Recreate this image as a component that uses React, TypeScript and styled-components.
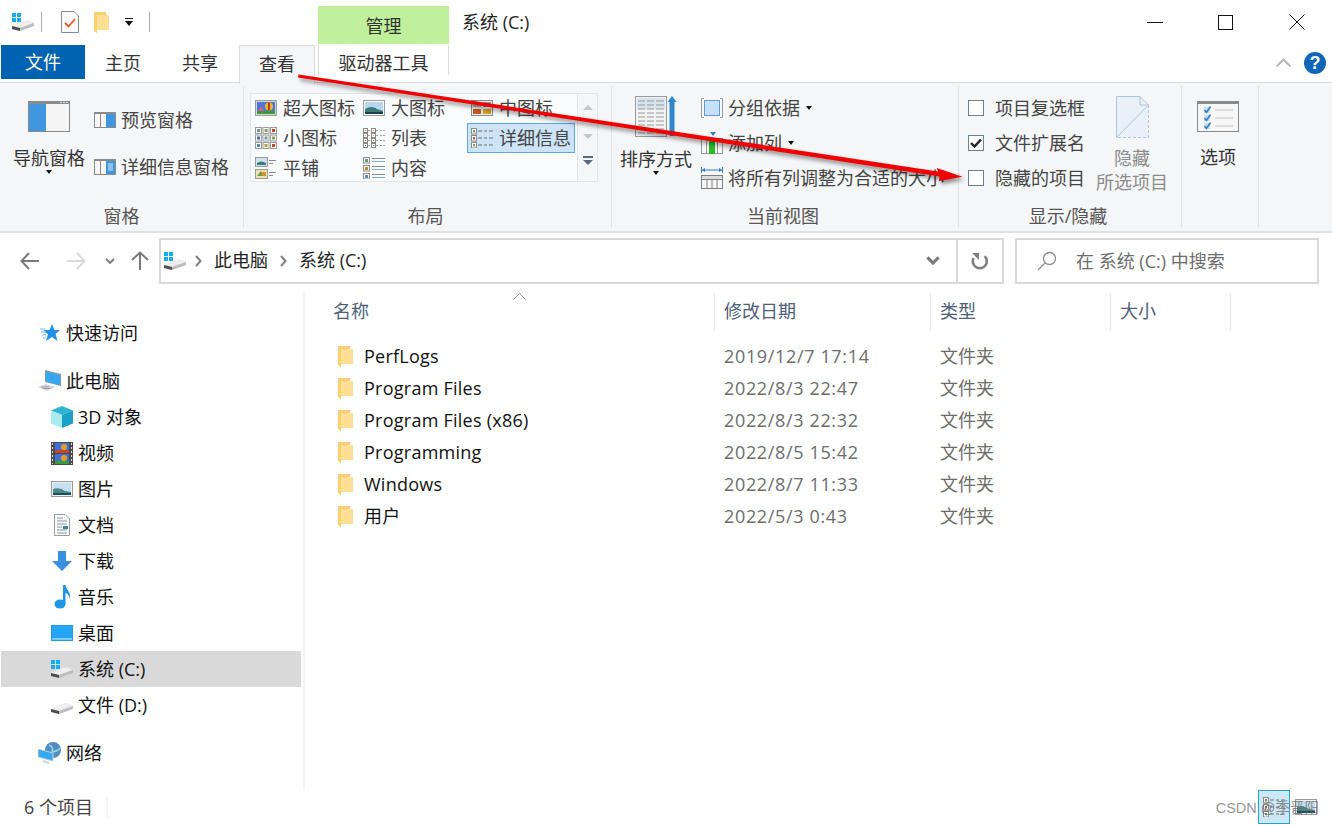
import React from 'react';
import styled, { createGlobalStyle } from 'styled-components';

const GlobalStyle = createGlobalStyle`
    html, body { margin: 0; padding: 0; background: #fff; }
    * { box-sizing: border-box; }
`

const Window = styled.div`
    position: relative;
    width: 1332px;
    height: 826px;
    overflow: hidden;
    display: flex;
    flex-direction: column;
    background: #fff;
    color: #1a1a1a;
    font-family: "Open Sans", "Noto Sans CJK SC", sans-serif;
    font-size: 18px;
    line-height: 24px;
`

const TitleBar = styled.div`
    display: flex;
    height: 44px;
    flex: none;
`

const QuickAccess = styled.div`
    width: 318px;
    display: flex;
    align-items: center;
    padding-left: 12px;
`

const QuickSep = styled.span<{ $ml: number }>`
    width: 1px;
    height: 20px;
    margin-left: ${p => p.$ml}px;
    background: #a9a9a9;
`

const IconSlot = styled.span<{ $ml: number }>`
    display: flex;
    flex: none;
    margin-left: ${p => p.$ml}px;
`

const ContextHead = styled.div`
    width: 131px;
    margin-top: 6px;
    background: #c0f09c;
    color: #333;
    text-align: center;
    line-height: 40px;
`

const WindowTitle = styled.div`
    margin-left: 13px;
    line-height: 44px;
    color: #222;
    flex: 1;
`

const WindowControls = styled.div`
    display: flex;
`

const ControlButton = styled.div`
    width: 71px;
    display: flex;
    align-items: center;
    justify-content: center;
`

const TabRow = styled.div`
    display: flex;
    height: 39px;
    flex: none;
    align-items: stretch;
    border-bottom: 1px solid #dadbdc;
    position: relative;
`

const FileTab = styled.div`
    width: 84px;
    height: 34px;
    margin: 1px 0 0 1px;
    background: #0063b1;
    color: #fff;
    text-align: center;
    line-height: 34px;
`

const Tab = styled.div<{ $w: number }>`
    width: ${p => p.$w}px;
    text-align: center;
    line-height: 38px;
    color: #333;
`

const ActiveTab = styled.div`
    width: 76px;
    height: 39px;
    margin: 1px 3px 0 0;
    background: #f5f6f7;
    border: 1px solid #dadbdc;
    border-bottom: none;
    text-align: center;
    line-height: 36px;
    color: #333;
    z-index: 1;
`

const ContextTab = styled.div`
    width: 131px;
    height: 30px;
    margin-top: 1px;
    border: solid #dadbdc;
    border-width: 0 1px;
    text-align: center;
    line-height: 36px;
    color: #333;
`

const CollapseArea = styled.div`
    margin-left: auto;
    display: flex;
    align-items: center;
    height: 38px;
    gap: 12px;
    padding-right: 6px;

    & > svg { transform: rotate(180deg); }
`

const HelpBadge = styled.div`
    width: 22px;
    height: 22px;
    border-radius: 50%;
    background: #0f67b8;
    color: #fff;
    font: bold 18px/22px "Liberation Sans", sans-serif;
    text-align: center;
`

const Ribbon = styled.div`
    display: flex;
    flex: none;
    height: 150px;
    padding: 3px 0 3px;
    background: #f5f6f7;
    border-bottom: 2px solid #dfe0e2;
`

const Group = styled.section<{ $w: number }>`
    width: ${p => p.$w}px;
    display: flex;
    flex-direction: column;
    border-right: 1px solid #e1e3e6;
`

const GroupBody = styled.div<{ $pad?: number }>`
    display: flex;
    flex: none;
    height: 118px;
    padding-left: ${p => p.$pad ?? 0}px;
`

const GroupLabel = styled.div<{ $shift?: number }>`
    text-align: center;
    line-height: 24px;
    color: #555;
    padding-right: ${p => p.$shift ?? 0}px;
`

const LargeButton = styled.div<{ $top: number; $gap: number; $muted?: boolean; $ml?: number }>`
    width: 72px;
    flex: none;
    display: flex;
    flex-direction: column;
    align-items: center;
    text-align: center;
    margin-left: ${p => p.$ml ?? 0}px;
    padding-top: ${p => p.$top}px;
    color: ${p => (p.$muted ? '#8c8c8c' : '#333')};

    & > svg { margin-bottom: ${p => p.$gap}px; flex: none; }
`

const Caret = styled.i<{ $ml?: number }>`
    display: inline-block;
    flex: none;
    width: 0;
    height: 0;
    margin-left: ${p => p.$ml ?? 0}px;
    border: 3.5px solid transparent;
    border-top: 4px solid #111;
    border-bottom: none;
`

const SmallColumn = styled.div<{ $top: number; $gap: number; $ml: number }>`
    display: flex;
    flex-direction: column;
    padding-top: ${p => p.$top}px;
    gap: ${p => p.$gap}px;
    margin-left: ${p => p.$ml}px;
`

const SmallButton = styled.div<{ $gap?: number }>`
    display: flex;
    align-items: center;
    height: 24px;
    white-space: nowrap;
    color: #444;
    gap: ${p => p.$gap ?? 5}px;
`

const Gallery = styled.div`
    display: grid;
    grid-template-columns: repeat(3, 108px);
    grid-auto-rows: 30px;
    width: 327px;
    height: 89px;
    margin: 7px 0 0 6px;
    background: #fafbfc;
    border: 1px solid #e2e4e7;
    border-right: none;
`

const GalleryItem = styled.div<{ $on?: boolean }>`
    display: flex;
    align-items: center;
    gap: 6px;
    padding-left: ${p => (p.$on ? 3 : 4)}px;
    margin-top: -1px;
    height: 30px;
    white-space: nowrap;
    color: #444;
    background: ${p => (p.$on ? '#cde4f8' : 'transparent')};
    border: ${p => (p.$on ? '1px solid #62a3e4' : 'none')};
`

const GalleryScroll = styled.div`
    width: 21px;
    height: 89px;
    margin-top: 7px;
    border: 1px solid #e2e4e7;
    display: flex;
    flex-direction: column;
    align-items: center;
    padding-top: 11px;
`

const ScrollArrow = styled.i<{ $up?: boolean; $mt: number; $dark?: boolean }>`
    width: 0;
    height: 0;
    margin-top: ${p => p.$mt}px;
    border: 5px solid transparent;
    ${p => (p.$up ? 'border-top: none; border-bottom: 5px solid #c4c7cc;' : `border-bottom: none; border-top: 5px solid ${p.$dark ? '#5a6a7d' : '#c4c7cc'};`)}
`

const ScrollBar = styled.i`
    width: 10px;
    height: 2px;
    margin-top: 17px;
    margin-bottom: -15px;
    background: #5a6a7d;
`

const CheckBox = styled.span`
    width: 16px;
    height: 16px;
    flex: none;
    background: #fff;
    border: 1px solid #6d7f99;
    display: flex;
    align-items: center;
    justify-content: center;
`

const AddressRow = styled.div`
    display: flex;
    height: 60px;
    flex: none;
    padding-top: 5px;
`

const NavArea = styled.div`
    width: 159px;
    height: 46px;
    flex: none;
    display: flex;
    align-items: center;
    padding: 0 0 0 20px;
`

const AddressBox = styled.div`
    width: 845px;
    height: 46px;
    display: flex;
    align-items: center;
    border: 2px solid #d9d9d9;
    padding-left: 3px;
    color: #222;
`

const CrumbSpacer = styled.span`
    width: 9px;
    flex: none;
`

const Crumb = styled.span`
    margin: -2px 12px 0;
    white-space: nowrap;
`

const AddressDrop = styled.div`
    margin-left: auto;
    width: 53px;
    display: flex;
    justify-content: flex-start;
    padding-left: 23px;
`

const RefreshBox = styled.div`
    width: 46px;
    height: 100%;
    flex: none;
    border-left: 2px solid #d9d9d9;
    display: flex;
    align-items: center;
    justify-content: center;
`

const SearchBox = styled.div`
    width: 304px;
    height: 46px;
    margin-left: 11px;
    border: 2px solid #d9d9d9;
    display: flex;
    align-items: center;
    padding-left: 20px;
    gap: 19px;
    color: #6d6d6d;
    white-space: nowrap;
`

const Main = styled.div`
    display: flex;
    flex: 1;
    min-height: 0;
`

const Sidebar = styled.nav`
    width: 305px;
    flex: none;
    padding-top: 22px;
    border-right: 2px solid #f3f3f3;
`

const NavRow = styled.div<{ $child?: boolean; $on?: boolean; $gap?: number }>`
    display: flex;
    align-items: center;
    height: 36px;
    width: 300px;
    margin-left: 1px;
    margin-top: ${p => p.$gap ?? 0}px;
    padding-left: ${p => (p.$child ? 49 : 37)}px;
    gap: ${p => (p.$child ? 4 : 4)}px;
    background: ${p => (p.$on ? '#d9d9d9' : 'transparent')};
    color: #111;
    white-space: nowrap;
`

const NavIcon = styled.span`
    width: 24px;
    height: 24px;
    flex: none;
    display: flex;
    align-items: center;
    justify-content: center;
`

const FileList = styled.div`
    flex: 1;
`

const HeaderRow = styled.div`
    position: relative;
    display: flex;
    height: 38px;
    color: #4c607a;
`

const HeaderCell = styled.div<{ $w: number; $pad: number }>`
    width: ${p => p.$w}px;
    padding-left: ${p => p.$pad}px;
    line-height: 36px;
    border-right: 1px solid #e5e5e5;
`

const SortArrow = styled.svg`
    position: absolute;
    top: 0;
    left: 208px;
`

const Rows = styled.div`
    padding-top: 9px;
`

const FileRow = styled.div`
    display: flex;
    align-items: center;
    height: 32px;
    white-space: nowrap;
`

const NameCell = styled.div`
    width: 410px;
    padding-left: 33px;
    display: flex;
    align-items: center;
    gap: 11px;
    color: #111;
    letter-spacing: 0.25px;
`

const DateCell = styled.div`
    width: 216px;
    padding-left: 9px;
    color: #6d6d6d;
    letter-spacing: 0.65px;
`

const TypeCell = styled.div`
    padding-left: 9px;
    color: #6d6d6d;
`

const StatusBar = styled.div`
    display: flex;
    align-items: center;
    flex: none;
    height: 36px;
    padding: 0 0 2px 24px;
    color: #444;
`

const StatusSep = styled.span`
    width: 2px;
    height: 20px;
    margin-left: 13px;
    background: #f3f3f3;
`

const ViewToggle = styled.div<{ $on?: boolean; $ml?: number }>`
    width: 32px;
    height: 34px;
    margin-left: ${p => p.$ml ?? 0}px;
    display: flex;
    align-items: center;
    justify-content: center;
    background: ${p => (p.$on ? '#cce8f7' : 'transparent')};
    border: 1px solid ${p => (p.$on ? '#26a0da' : 'transparent')};
`

const Watermark = styled.div`
    position: absolute;
    right: 13px;
    bottom: 8px;
    font: 14.5px/20px "Liberation Sans", "Noto Sans CJK SC", sans-serif;
    color: rgba(100, 100, 100, 0.7);
    white-space: nowrap;
    z-index: 2;
`

const ArrowOverlay = styled.svg`
    position: absolute;
    top: 0;
    left: 0;
    z-index: 3;
    pointer-events: none;
    filter: drop-shadow(2px 3px 2px rgba(0, 0, 0, 0.45));
`

/* ---- icons ---- */

const DriveIcon: React.FC<{ flag?: boolean }> = ({ flag = true }) => (
    <svg width="22" height="18" viewBox="0 0 22 18">
        {flag && (
            <g fill="#12aeef">
                <rect x="0" y="0" width="4" height="4" />
                <rect x="5" y="0" width="4" height="4" />
                <rect x="0" y="5" width="4" height="4" />
                <rect x="5" y="5" width="4" height="4" />
            </g>
        )}
        <path d="M0 13 L15 7 L22 10 L22 13 L7 18 L0 16 Z" fill="#dcdcdc" />
        <path d="M0 12.5 L15 7 L22 10 L8 15 Z" fill="#eeeeee" />
        <path d="M0 13 L8 15 L8 18 L0 16 Z" fill="#4d4d4d" />
        <path d="M8 15 L22 10 L22 13 L8 18 Z" fill="#bdbdbd" />
    </svg>
)

const FolderIcon = () => (
    <svg width="15" height="21" viewBox="0 0 15 21">
        <path d="M0 1 L1 0 L12 0 L12 3 L15 3 L15 18 L3 18 L3 21 L0 19 Z" fill="#f5cf6f" />
        <path d="M3 3 L15 3 L15 18 L3 18 Z" fill="#fddf95" />
        <path d="M0 2 L3 3 L3 21 L0 19 Z" fill="#f7d26f" />
    </svg>
)

const PaneIcon = () => (
    <svg width="42" height="31" viewBox="0 0 42 31">
        <rect x="0.5" y="0.5" width="41" height="30" fill="#f5f5f5" stroke="#8a8a8a" />
        <rect x="0" y="0" width="42" height="3" fill="#8a8a8a" />
        <rect x="1" y="3" width="17" height="27" fill="#3f97e0" />
        <path d="M32 1h2v1h-2zM35 1h2v1h-2zM38 1h2v1h-2z" fill="#ddd" />
    </svg>
)

const SmallPane: React.FC<{ lines?: boolean }> = ({ lines }) => (
    <svg width="22" height="16" viewBox="0 0 22 16">
        <rect x="0.5" y="0.5" width="21" height="15" fill="#f7f7f7" stroke="#8a8a8a" />
        <rect x="0" y="0" width="22" height="2" fill="#8a8a8a" />
        <rect x="6" y="2" width="1" height="13" fill="#8a8a8a" />
        <rect x="12" y="2" width="9" height="13" fill="#3f97e0" />
        {lines && <path d="M14 5h5M14 7h5M14 9h5M14 11h5" stroke="#dbeaf8" />}
    </svg>
)

const ThumbBig = () => (
    <svg width="22" height="16" viewBox="0 0 22 16">
        <rect x="0.5" y="0.5" width="21" height="15" fill="#d8d8d8" stroke="#9a9a9a" />
        <rect x="2" y="2" width="18" height="12" fill="#4a78d8" />
        <rect x="2" y="11" width="18" height="3" fill="#3f9a3a" />
        <circle cx="14" cy="6.5" r="4" fill="#e8b820" />
        <rect x="13" y="2.5" width="2" height="8" fill="#c0392b" />
        <path d="M3 11l3-5 3 5z" fill="#d85a9a" />
    </svg>
)

const ThumbLandscape = () => (
    <svg width="22" height="16" viewBox="0 0 22 16">
        <rect x="0.5" y="0.5" width="21" height="15" fill="#fff" stroke="#9a9a9a" />
        <rect x="2" y="2" width="18" height="12" fill="#b9d7ea" />
        <path d="M2 9 Q9 5 14 9 L20 11 L20 14 L2 14 Z" fill="#3c7a7a" />
        <rect x="2" y="12" width="18" height="2" fill="#18404f" />
    </svg>
)

const ThumbMedium = () => (
    <svg width="22" height="16" viewBox="0 0 22 16">
        <rect x="0.5" y="0.5" width="21" height="15" fill="#eee" stroke="#8a8a8a" />
        <rect x="2" y="2" width="8" height="5" fill="#a0b4a0" />
        <rect x="12" y="2" width="8" height="5" fill="#7f9fb0" />
        <rect x="2" y="9" width="8" height="5" fill="#c8542a" />
        <rect x="12" y="9" width="8" height="5" fill="#d8a02a" />
    </svg>
)

const ThumbSmall = () => {
    const colors = ['#6a9a9a', '#8aa05a', '#c8442a', '#4a68a8', '#6aa0a0', '#8aa05a', '#4f8fb0', '#b8a030', '#c8442a']
    return (
        <svg width="22" height="22" viewBox="0 0 22 22">
            {colors.map((c, i) => (
                <g key={i}>
                    <rect x={0.5 + (i % 3) * 7.5} y={0.5 + Math.floor(i / 3) * 7.5} width="6" height="6" fill="#fff" stroke="#9a9a9a" />
                    <rect x={2 + (i % 3) * 7.5} y={2 + Math.floor(i / 3) * 7.5} width="3" height="3" fill={c} />
                </g>
            ))}
        </svg>
    )
}

const ListIcon = () => (
    <svg width="22" height="20" viewBox="0 0 22 20">
        {[0, 8].map(x => [0, 5, 10, 15].map((y, i) => (
            <g key={`${x}-${y}`}>
                <rect x={x + 0.5} y={y + 0.5} width="4" height="4" fill="#fff" stroke="#8a8a8a" />
                <rect x={x + 2} y={y + 2} width="1" height="1" fill={['#6a9a4a', '#c8a030', '#c8542a', '#7a7a7a'][i]} />
                <path d={`M${x + 5} ${y + 2.5}h2`} stroke="#a0a0a0" />
            </g>
        )))}
        {[0, 5, 10, 15].map(y => <path key={y} d={`M17 ${y + 2.5}h5`} stroke="#a0a0a0" strokeDasharray="2 1" />)}
    </svg>
)

const TileIcon = () => (
    <svg width="22" height="22" viewBox="0 0 22 22">
        <rect x="0.5" y="0.5" width="12" height="9" fill="#cfe2ee" stroke="#9a9a9a" />
        <path d="M2 6 Q6 3 11 6 L11 8 L2 8 Z" fill="#3c7a7a" />
        <rect x="0.5" y="12.5" width="12" height="9" fill="#e8e4b0" stroke="#9a9a9a" />
        <path d="M2 19 L6 14 L9 19 Z" fill="#6a9a4a" />
        <rect x="7" y="15" width="4" height="4" fill="#d8902a" />
        <path d="M14 3.5h7M14 6.5h4M14 15.5h7M14 18.5h4" stroke="#8a8a8a" />
    </svg>
)

const ContentIcon = () => (
    <svg width="22" height="22" viewBox="0 0 22 22">
        {[0, 8, 16].map((y, i) => (
            <g key={y}>
                <rect x="0.5" y={y + 0.5} width="6" height="5.5" fill="#fff" stroke="#8a8a8a" />
                <rect x="2" y={y + 2} width="3" height="3" fill={['#6a9a7a', '#c8842a', '#5a8ab0'][i]} />
                <path d={`M9 ${y + 1.5}h13`} stroke="#8a8a8a" />
                <path d={`M9 ${y + 4.5}h13`} stroke="#7aa8e0" />
            </g>
        ))}
    </svg>
)

const DetailsIcon = () => (
    <svg width="22" height="20" viewBox="0 0 22 20">
        {[0, 7, 14].map((y, i) => (
            <g key={y}>
                <rect x="0.5" y={y + 0.5} width="5" height="5.5" fill="#fff" stroke="#8a8a8a" />
                <rect x="2" y={y + 2} width="2" height="2.5" fill={['#6a9a4a', '#c8542a', '#8a9a5a'][i]} />
                <path d={`M7 ${y + 3}h4M13 ${y + 3}h3M18 ${y + 3}h4`} stroke="#707070" />
            </g>
        ))}
    </svg>
)

const SortIcon = () => (
    <svg width="42" height="41" viewBox="0 0 42 41">
        <rect x="0.5" y="0.5" width="31" height="40" fill="#f2f2f2" stroke="#9a9a9a" />
        <rect x="2" y="2" width="28" height="11" fill="#d5e3ec" />
        <path d="M3 5h7M12 5h7M21 5h8M3 9h7M12 9h7M21 9h8M3 13h7M12 13h7M21 13h8M3 17h7M12 17h7M21 17h8M3 21h7M12 21h7M21 21h8M3 25h7M12 25h7M21 25h8M3 29h7M12 29h7M21 29h8M3 33h7M12 33h7M21 33h8M3 37h7M12 37h7M21 37h8" stroke="#9a9a9a" />
        <rect x="34.5" y="3" width="5" height="37" rx="1" fill="#2f86cf" />
        <path d="M32.5 6 L37 0 L41.5 6 Z" fill="#2f86cf" />
    </svg>
)

const GroupByIcon = () => (
    <svg width="22" height="20" viewBox="0 0 22 20">
        <path d="M3 .5H.5v19H3M19 .5h2.5v19H19" fill="none" stroke="#9a9a9a" />
        <rect x="3.5" y="2.5" width="15" height="15" fill="#c5e0f9" stroke="#6a9ad0" />
    </svg>
)

const AddColumnIcon = () => (
    <svg width="22" height="22" viewBox="0 0 22 22">
        <path d="M9 0h6l-3 4z" fill="#2f7ec8" />
        <rect x="0.5" y="6.5" width="21" height="15" fill="#f7f7f7" stroke="#9a9a9a" />
        <rect x="8" y="6" width="6" height="16" fill="#22c024" />
        <path d="M5.5 7v14M16.5 7v14" stroke="#9a9a9a" />
    </svg>
)

const FitColumnsIcon = () => (
    <svg width="22" height="22" viewBox="0 0 22 22">
        <path d="M.5 0v6M21.5 0v6M1 3h20" stroke="#2f7ec8" />
        <path d="M1 3l3-2v4zM21 3l-3-2v4z" fill="#2f7ec8" />
        <rect x="0.5" y="8.5" width="21" height="13" fill="#f7f7f7" stroke="#808080" />
        <rect x="0.5" y="8.5" width="21" height="4" fill="#dcdcdc" stroke="#808080" />
        <path d="M6 13v8M11 13v8M16 13v8" stroke="#808080" />
    </svg>
)

const HideIcon = () => (
    <svg width="33" height="42" viewBox="0 0 33 42">
        <path d="M.5 .5H24L32.5 9V41.5H.5Z" fill="#e8f0fa" />
        <path d="M32.5 9V41.5H.5" fill="none" stroke="#b5c3d8" strokeDasharray="3 2" />
        <path d="M.5 41.5V.5H24L32.5 9H24V.5" fill="none" stroke="#b5c3d8" />
        <path d="M.5 41.5L32.5 9" stroke="#b5c3d8" />
    </svg>
)

const OptionsIcon = () => (
    <svg width="42" height="31" viewBox="0 0 42 31">
        <rect x="0.5" y="0.5" width="41" height="30" fill="#f7f7f7" stroke="#8a8a8a" />
        <rect x="0" y="0" width="42" height="3" fill="#8a8a8a" />
        {[6, 14, 22].map(y => (
            <g key={y}>
                <rect x="7" y={y} width="6" height="6" fill="#c8e0f6" />
                <path d={`M7.5 ${y + 3}l2 2.5l4-6`} fill="none" stroke="#2f7ec8" strokeWidth="1.6" />
                <path d={`M18 ${y + 3}h18`} stroke="#c0c0c0" />
            </g>
        ))}
    </svg>
)

const ArrowIcon: React.FC<{ dir: 'left' | 'right' | 'up'; color: string }> = ({ dir, color }) => {
    const rotate = { left: 0, right: 180, up: 90 }[dir]
    return (
        <svg width="20" height="20" viewBox="0 0 20 20" transform={`rotate(${rotate})`}>
            <path d="M1 10H19M9 2L1.5 10L9 18" fill="none" stroke={color} strokeWidth="2" />
        </svg>
    )
}

const Chevron: React.FC<{ w?: number; color?: string; sw?: number }> = ({ w = 10, color = '#6d6d6d', sw = 2 }) => (
    <svg width={w} height={w * 0.65} viewBox="0 0 10 6.5">
        <path d="M1 1L5 5L9 1" fill="none" stroke={color} strokeWidth={sw} />
    </svg>
)

const CrumbChevron = () => (
    <svg width="7" height="12" viewBox="0 0 7 12">
        <path d="M1 1L5.5 6L1 11" fill="none" stroke="#7f7f7f" strokeWidth="2" />
    </svg>
)

const StarIcon = () => (
    <svg width="20" height="18" viewBox="0 0 20 18">
        <path d="M12 0L14.5 6H20L15.6 10L17.5 17L12 13L6 17L8 10.5L3.5 6H9.5Z" fill="#1e90e8" />
        <path d="M0 5H5M1 8H6M2 11H6M3 14H6" stroke="#6cb8f0" />
    </svg>
)

const PcIcon = () => (
    <svg width="24" height="22" viewBox="0 0 24 22">
        <path d="M7 0L23 4V16L7 12Z" fill="#7a9ab0" />
        <path d="M8 2L22 5.5V15L8 11.5Z" fill="#35a8f2" />
        <path d="M0 17L8 14L17 17L9 21Z" fill="#d0d4d8" />
        <path d="M3 17h8M5 18.5h8" stroke="#9aa2a8" />
    </svg>
)

const CubeIcon = () => (
    <svg width="22" height="22" viewBox="0 0 22 22">
        <path d="M11 0L22 4.5L11 9L0 4.5Z" fill="#2fb4d4" />
        <path d="M0 4.5L11 9V22L0 17.5Z" fill="#a8ecf0" />
        <path d="M22 4.5L11 9V22L22 17.5Z" fill="#18a0c8" />
    </svg>
)

const FilmIcon = () => (
    <svg width="22" height="23" viewBox="0 0 22 23">
        <rect width="22" height="23" fill="#4a4a4a" />
        <rect x="4" y="1" width="14" height="10" fill="#3f6fd8" />
        <rect x="4" y="12" width="14" height="10" fill="#3f6fd8" />
        <rect x="4" y="8" width="14" height="3" fill="#c8442a" />
        <rect x="4" y="19" width="14" height="3" fill="#3f9a3a" />
        <circle cx="13" cy="5" r="3" fill="#e8a020" />
        <circle cx="13" cy="16" r="3" fill="#e8a020" />
        <path d="M1.5 1v21M20.5 1v21" stroke="#ddd" strokeDasharray="2 2" />
    </svg>
)

const PictureIcon = () => (
    <svg width="22" height="16" viewBox="0 0 22 16">
        <rect x="0.5" y="0.5" width="21" height="15" fill="#f0f0f0" stroke="#9a9a9a" />
        <rect x="2" y="2" width="18" height="12" fill="#c6dfee" />
        <path d="M2 8 Q9 6 14 10 L20 11 L20 14 L2 14 Z" fill="#4c8a86" />
        <rect x="2" y="12" width="18" height="2" fill="#1c5060" />
    </svg>
)

const DocIcon = () => (
    <svg width="16" height="22" viewBox="0 0 16 22">
        <path d="M.5 .5H11L15.5 5V21.5H.5Z" fill="#fff" stroke="#9a9a9a" />
        <path d="M3 4h6M3 7h10M3 10h10M3 13h5M3 16h10M3 19h10" stroke="#7f8f9f" />
        <rect x="9" y="12" width="5" height="3" fill="#3f7f9f" />
    </svg>
)

const DownloadIcon = () => (
    <svg width="20" height="20" viewBox="0 0 20 20">
        <path d="M6 0H14V10H20L10 20L0 10H6Z" fill="#3a8fe0" />
    </svg>
)

const NoteIcon = () => (
    <svg width="18" height="24" viewBox="0 0 18 24">
        <ellipse cx="7" cy="19" rx="5.5" ry="4.5" fill="#1e96e8" />
        <path d="M10 0H12.5C13 5 18 6 17 14C16 10 14 8 12.5 8V19H10Z" fill="#1e96e8" />
    </svg>
)

const DesktopIcon = () => (
    <svg width="22" height="16" viewBox="0 0 22 16">
        <rect width="22" height="16" fill="#1f9bf0" />
        <rect x="1" y="1" width="20" height="13" fill="#23a6f6" />
        <path d="M1 14h20" stroke="#e0f2ff" />
    </svg>
)

const NetworkIcon = () => (
    <svg width="24" height="22" viewBox="0 0 24 22">
        <circle cx="15" cy="8" r="8" fill="#4f8fc0" />
        <path d="M11 3Q16 5 14 10Q20 9 22 6" stroke="#9ad0e8" fill="none" strokeWidth="1.5" />
        <path d="M0 7L15 11V19L0 15Z" fill="#35a8f2" stroke="#c4d0d8" />
        <path d="M5 18L11 20V22L5 20Z" fill="#c8d0d8" />
    </svg>
)

const GALLERY = [
    { icon: <ThumbBig />, label: '超大图标' },
    { icon: <ThumbLandscape />, label: '大图标' },
    { icon: <ThumbMedium />, label: '中图标' },
    { icon: <ThumbSmall />, label: '小图标' },
    { icon: <ListIcon />, label: '列表' },
    { icon: <DetailsIcon />, label: '详细信息', on: true },
    { icon: <TileIcon />, label: '平铺' },
    { icon: <ContentIcon />, label: '内容' },
]

const PLACES = [
    { icon: <CubeIcon />, label: '3D 对象' },
    { icon: <FilmIcon />, label: '视频' },
    { icon: <PictureIcon />, label: '图片' },
    { icon: <DocIcon />, label: '文档' },
    { icon: <DownloadIcon />, label: '下载' },
    { icon: <NoteIcon />, label: '音乐' },
    { icon: <DesktopIcon />, label: '桌面' },
    { icon: <DriveIcon />, label: '系统 (C:)', on: true },
    { icon: <DriveIcon flag={false} />, label: '文件 (D:)' },
]

const FILES = [
    ['PerfLogs', '2019/12/7 17:14'],
    ['Program Files', '2022/8/3 22:47'],
    ['Program Files (x86)', '2022/8/3 22:32'],
    ['Programming', '2022/8/5 15:42'],
    ['Windows', '2022/8/7 11:33'],
    ['用户', '2022/5/3 0:43'],
]

const App: React.FC = () => {
    return (
        <Window>
            <GlobalStyle />
            <TitleBar>
                <QuickAccess>
                    <DriveIcon />
                    <QuickSep $ml={7} />
                    <IconSlot $ml={19}>
                        <svg width="18" height="22" viewBox="0 0 18 22">
                            <path d="M.5 .5H13L17.5 5V21.5H.5Z" fill="#fafafa" stroke="#8a8a8a" />
                            <path d="M4 12L7.5 15.5L14 8" fill="none" stroke="#e8582a" strokeWidth="1.8" />
                        </svg>
                    </IconSlot>
                    <IconSlot $ml={15}><FolderIcon /></IconSlot>
                    <IconSlot $ml={15}>
                        <svg width="10" height="8" viewBox="0 0 10 8">
                            <path d="M1 0h8v1H1zM1 3h8L5 8z" fill="#111" />
                        </svg>
                    </IconSlot>
                    <QuickSep $ml={15} />
                </QuickAccess>
                <ContextHead>管理</ContextHead>
                <WindowTitle>系统 (C:)</WindowTitle>
                <WindowControls>
                    <ControlButton>
                        <svg width="16" height="1" viewBox="0 0 16 1"><rect width="16" height="1" fill="#111" /></svg>
                    </ControlButton>
                    <ControlButton>
                        <svg width="15" height="15" viewBox="0 0 15 15"><rect x=".5" y=".5" width="14" height="14" fill="none" stroke="#111" /></svg>
                    </ControlButton>
                    <ControlButton>
                        <svg width="16" height="16" viewBox="0 0 16 16"><path d="M.5 .5L15.5 15.5M15.5 .5L.5 15.5" stroke="#111" /></svg>
                    </ControlButton>
                </WindowControls>
            </TitleBar>

            <TabRow>
                <FileTab>文件</FileTab>
                <Tab $w={76}>主页</Tab>
                <Tab $w={78}>共享</Tab>
                <ActiveTab>查看</ActiveTab>
                <ContextTab>驱动器工具</ContextTab>
                <CollapseArea>
                    <Chevron w={17} color="#b5b5b5" sw={1.2} />
                    <HelpBadge>?</HelpBadge>
                </CollapseArea>
            </TabRow>

            <Ribbon>
                <Group $w={244}>
                    <GroupBody $pad={13}>
                        <LargeButton $top={15} $gap={14}>
                            <PaneIcon />
                            导航窗格
                            <Caret />
                        </LargeButton>
                        <SmallColumn $top={22} $gap={23} $ml={9}>
                            <SmallButton><SmallPane />预览窗格</SmallButton>
                            <SmallButton><SmallPane lines />详细信息窗格</SmallButton>
                        </SmallColumn>
                    </GroupBody>
                    <GroupLabel>窗格</GroupLabel>
                </Group>

                <Group $w={368}>
                    <GroupBody>
                        <Gallery>
                            {GALLERY.map(item => (
                                <GalleryItem key={item.label} $on={item.on}>
                                    {item.icon}
                                    {item.label}
                                </GalleryItem>
                            ))}
                        </Gallery>
                        <GalleryScroll>
                            <ScrollArrow $up $mt={0} />
                            <ScrollArrow $mt={24} />
                            <ScrollBar />
                            <ScrollArrow $mt={17} $dark />
                        </GalleryScroll>
                    </GroupBody>
                    <GroupLabel $shift={4}>布局</GroupLabel>
                </Group>

                <Group $w={347}>
                    <GroupBody $pad={8}>
                        <LargeButton $top={10} $gap={10}>
                            <SortIcon />
                            排序方式
                            <Caret />
                        </LargeButton>
                        <SmallColumn $top={10} $gap={11} $ml={9}>
                            <SmallButton><GroupByIcon />分组依据<Caret $ml={1} /></SmallButton>
                            <SmallButton><AddColumnIcon />添加列<Caret $ml={1} /></SmallButton>
                            <SmallButton><FitColumnsIcon />将所有列调整为合适的大小</SmallButton>
                        </SmallColumn>
                    </GroupBody>
                    <GroupLabel $shift={4}>当前视图</GroupLabel>
                </Group>

                <Group $w={223}>
                    <GroupBody $pad={9}>
                        <SmallColumn $top={10} $gap={11} $ml={0}>
                            <SmallButton $gap={11}><CheckBox />项目复选框</SmallButton>
                            <SmallButton $gap={11}>
                                <CheckBox>
                                    <svg width="12" height="10" viewBox="0 0 12 10">
                                        <path d="M1 5L4.5 8.5L11 1.5" fill="none" stroke="#222" strokeWidth="2.4" />
                                    </svg>
                                </CheckBox>
                                文件扩展名
                            </SmallButton>
                            <SmallButton $gap={11}><CheckBox />隐藏的项目</SmallButton>
                        </SmallColumn>
                        <LargeButton $top={10} $gap={8} $muted $ml={11}>
                            <HideIcon />
                            隐藏
                            <br />
                            所选项目
                        </LargeButton>
                    </GroupBody>
                    <GroupLabel $shift={4}>显示/隐藏</GroupLabel>
                </Group>

                <Group $w={77}>
                    <GroupBody>
                        <LargeButton $top={15} $gap={13}>
                            <OptionsIcon />
                            选项
                        </LargeButton>
                    </GroupBody>
                </Group>
            </Ribbon>

            <AddressRow>
                <NavArea>
                    <ArrowIcon dir="left" color="#7a7a7a" />
                    <IconSlot $ml={26}><ArrowIcon dir="right" color="#d9d9d9" /></IconSlot>
                    <IconSlot $ml={19}><Chevron color="#7a7a7a" sw={1.8} /></IconSlot>
                    <IconSlot $ml={15}><ArrowIcon dir="up" color="#7a7a7a" /></IconSlot>
                </NavArea>
                <AddressBox>
                    <DriveIcon />
                    <CrumbSpacer />
                    <CrumbChevron />
                    <Crumb>此电脑</Crumb>
                    <CrumbChevron />
                    <Crumb>系统 (C:)</Crumb>
                    <AddressDrop><Chevron w={14} color="#7a7a7a" sw={2.2} /></AddressDrop>
                    <RefreshBox>
                        <svg width="18" height="18" viewBox="0 0 18 18">
                            <path d="M4 4 A7 7 0 1 0 15 6" transform="rotate(-20 9 9)" fill="none" stroke="#808080" strokeWidth="2.6" />
                            <path d="M1 1H8V8Z" fill="#808080" />
                        </svg>
                    </RefreshBox>
                </AddressBox>
                <SearchBox>
                    <svg width="20" height="20" viewBox="0 0 20 20">
                        <circle cx="12.5" cy="7.5" r="6" fill="none" stroke="#8a8a8a" strokeWidth="1.3" />
                        <path d="M8 12L1 19" stroke="#8a8a8a" strokeWidth="1.3" />
                    </svg>
                    在 系统 (C:) 中搜索
                </SearchBox>
            </AddressRow>

            <Main>
                <Sidebar>
                    <NavRow><NavIcon><StarIcon /></NavIcon>快速访问</NavRow>
                    <NavRow $gap={12}><NavIcon><PcIcon /></NavIcon>此电脑</NavRow>
                    {PLACES.map(place => (
                        <NavRow key={place.label} $child $on={place.on}>
                            <NavIcon>{place.icon}</NavIcon>
                            {place.label}
                        </NavRow>
                    ))}
                    <NavRow $gap={12}><NavIcon><NetworkIcon /></NavIcon>网络</NavRow>
                </Sidebar>
                <FileList>
                    <HeaderRow>
                        <SortArrow width="13" height="7" viewBox="0 0 13 7">
                            <path d="M.5 6.5L6.5 .5L12.5 6.5" fill="none" stroke="#9a9a9a" />
                        </SortArrow>
                        <HeaderCell $w={410} $pad={28}>名称</HeaderCell>
                        <HeaderCell $w={216} $pad={9}>修改日期</HeaderCell>
                        <HeaderCell $w={180} $pad={9}>类型</HeaderCell>
                        <HeaderCell $w={120} $pad={9}>大小</HeaderCell>
                    </HeaderRow>
                    <Rows>
                        {FILES.map(([name, date]) => (
                            <FileRow key={name}>
                                <NameCell><FolderIcon />{name}</NameCell>
                                <DateCell>{date}</DateCell>
                                <TypeCell>文件夹</TypeCell>
                            </FileRow>
                        ))}
                    </Rows>
                </FileList>
            </Main>

            <StatusBar>
                6 个项目
                <StatusSep />
                <ViewToggle $on $ml={1150}><DetailsIcon /></ViewToggle>
                <ViewToggle><PictureIcon /></ViewToggle>
            </StatusBar>

            <Watermark>CSDN @季晋阳</Watermark>

            <ArrowOverlay width="1332" height="826" viewBox="0 0 1332 826">
                <path d="M298.5 74.5 L938 171.5 L936.7 168 L962.5 176.7 L939 181 L939.5 176.5 L298 77.5 Z" fill="#f00000" />
            </ArrowOverlay>
        </Window>
    )
}

export default App;
